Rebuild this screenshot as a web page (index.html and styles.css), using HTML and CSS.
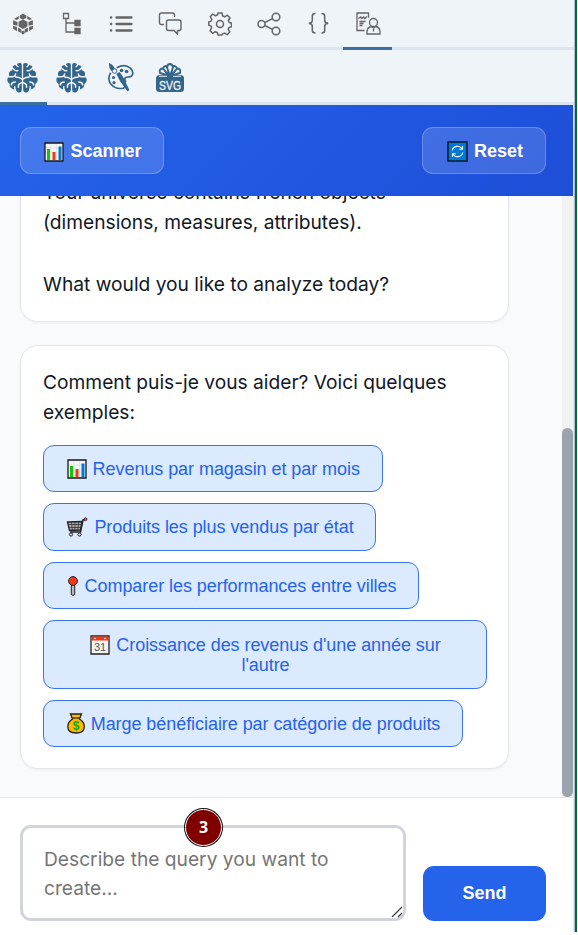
FILE: index.html
```html
<!DOCTYPE html>
<html lang="fr">
<head>
<meta charset="utf-8">
<title>Query assistant</title>
<link rel="stylesheet" href="styles.css">
</head>
<body>
<svg class="defs" aria-hidden="true">
  <symbol id="brain" viewBox="0 0 32 32">
    <g id="lobe"><path d="M15.300 2.500Q15 1 13 1 10.500 1 9.800 3.200 6 3 5.300 6.500 5.200 7.500 5.700 8.500 2 9 2 12.500q0 1 .5 2Q.3 15.500.3 18.500t2.500 4.300Q2.500 27 6.500 28q1.200.3 2.500 0 1 3.500 4 3.500 2.300 0 2.300-2.500z" fill="currentColor"/><path d="M5 5.800L8 8.300q1.500 1.200 3.200.6M1.500 15.300h4q3 0 3.500-3M9 15.500q4 0 6.300 2M4.500 23.500q.5-2.800 4-2.800M11.800 26q-.5-3.500 3.500-4.500M8.500 28.500q-.8-1.500-.5-3M9.600 2.500q.2 1.500 1.700 2.300" fill="none" stroke="#eff4f9" stroke-width="1.500" stroke-linecap="round"/></g>
    <use href="#lobe" transform="matrix(-1 0 0 1 32 0)"/>
  </symbol>
  <symbol id="chart" viewBox="0 0 20 20"><path d="M1 1h18v18H1z" fill="#f4f4f4" stroke="#17171d" stroke-width="1.300"/><path d="M2 6h16M2 11h16M6.500 2v16M12.500 2v16" stroke="#dedede" stroke-width=".6"/><path d="M3 7h3v11H3z" fill="#16c60c"/><path d="M8.500 10h3v8h-3z" fill="#f03a17"/><path d="M14.500 4.500h3V18h-3z" fill="#0078d7"/></symbol>
</svg>
<div class="app">
  <nav class="tabs tabs-main">
    <span class="tab"><svg viewBox="0 0 24 24" width="22" height="24" fill="#646464"><path d="M12 7l4.800 2.500v5.200L12 17.500l-4.800-2.800V9.500zM12 .8l3.600 1.900v2.800L12 7 8.400 5.500V2.700zM7.400 3.200v3L5 7.700 2.200 6.500zM16.600 3.200v3L19 7.700l2.800-1.200zM1.200 7.800l4.800 2v4.200l-4.800-1.200zM22.800 7.800l-4.800 2v4.200l4.800-1.200zM1.200 14l4.300 1.200v4.600l-4.300-2.600zM22.800 14l-4.300 1.200v4.600l4.300-2.600zM6.600 15.800l3.600 2.200v3.800l-3.600-1.500zM17.400 15.800L13.800 18v3.800l3.600-1.500zM12 19l1.500 1.200v2.500L12 23.500l-1.500-.8v-2.500z"/></svg></span>
    <span class="tab"><svg viewBox="0 0 24 24" width="24" height="24" fill="none" stroke="#646464" stroke-width="1.300"><path d="M3.500 1.500h5v5h-5zM6 6.500v13.500h9M6 11h9"/><path d="M15 8.500h5v5h-5zM15 16.500h5v5h-5z" fill="#646464"/></svg></span>
    <span class="tab"><svg viewBox="0 0 24 24" width="24" height="24" fill="none" stroke="#646464" stroke-width="2.300" stroke-linecap="round"><path d="M7.500 5.500h15M7.500 12h15M7.500 18.500h15M2 5.500h.3M2 12h.3M2 18.500h.3"/></svg></span>
    <span class="tab"><svg viewBox="0 0 24 24" width="24" height="24" fill="none" stroke="#646464" stroke-width="1.400" stroke-linejoin="round"><path d="M6 12.500H3.500Q1.500 12.500 1.500 10.500V3q0-2 2-2h11q2 0 2 2v2"/><path d="M10.500 8h10.500q2 0 2 2v6.500q0 2-2 2h-1.500v3.800l-3.500-3.800h-5.500q-2 0-2-2V10q0-2 2-2z"/></svg></span>
    <span class="tab"><svg viewBox="0 0 24 24" width="24" height="24" fill="none" stroke="#646464" stroke-width="1.500" stroke-linejoin="round"><circle cx="12" cy="12" r="3.500"/><path d="M10 1h4l.7 3 2 .8 2.600-1.600 2.700 2.700-1.600 2.600.8 2 2.300.6v3.600l-2.500.7-.8 2 1.600 2.600-2.700 2.700-2.500-1.600-2 .8L14 23h-4l-.7-2.500-2-.8-2.600 1.600L2 18.600l1.600-2.700-.8-2L.8 13.300V10l2.200-.8.8-2L2.200 4.700 4.800 2l2.600 1.800 2-.8z"/></svg></span>
    <span class="tab"><svg viewBox="0 0 24 24" width="24" height="24" fill="none" stroke="#646464" stroke-width="1.500"><circle cx="4.500" cy="12" r="3.500"/><circle cx="19" cy="5" r="3.800"/><circle cx="19" cy="19" r="3.800"/><path d="M7.800 10.500l7.600-3.800M7.800 13.500l7.600 3.800"/></svg></span>
    <span class="tab"><svg viewBox="0 0 24 24" width="24" height="24" fill="none" stroke="#646464" stroke-width="1.500"><path d="M9.500 1.500Q6.300 1.500 6.300 4v4.500q0 2.500-3.500 2.800 3.500.3 3.500 2.800V18.500q0 2.500 3.200 2.500M15.500 1.500q3.200 0 3.200 2.500v4.500q0 2.500 3.500 2.800-3.500.3-3.500 2.800V18.500q0 2.500-3.200 2.500"/></svg></span>
    <span class="tab is-active"><svg viewBox="0 0 26 24" width="26" height="24" fill="none" stroke="#646464" stroke-width="1.300"><path d="M9.500 18.500H2V1h11.500v4.800M3.500 6.500l2-1.500 1.300 1.500L8.500 5l1.200 1.500L12 4.500M4.500 9.500h6M4.500 11.500h4M4.500 13.500h3"/><circle cx="18.500" cy="10.500" r="4"/><path d="M12 22v-2q0-4.500 4-5.500l2.500 1.500 2.500-1.500q4 1 4 5.500v2zM18.500 16v3.500"/></svg></span>
  </nav>
  <nav class="tabs tabs-sub">
    <span class="tab is-active"><svg width="31" height="31"><use href="#brain"/></svg></span>
    <span class="tab"><svg width="31" height="31"><use href="#brain"/></svg></span>
    <span class="tab"><svg viewBox="0 0 30 32" width="28" height="31" fill="none" stroke="currentColor" stroke-width="1.800"><path d="M10.500 5.500Q19 1 25 6q4 4 2 7.500-1 2-4.500 2t-3.500 2.500q0 1.500 1.500 2.500M4 11Q0 17 4 23q5 6 13.500 4.500 1.500-.5 1-2"/><g fill="currentColor" stroke="none"><circle cx="15.500" cy="8.500" r="1.900"/><circle cx="21" cy="9.500" r="1.900"/><circle cx="7" cy="16" r="1.700"/><circle cx="7.500" cy="21.500" r="1.700"/><path d="M2 .5Q7 2 8.500 7L4.500 9Q2 6 2 .5zM10 12l3.500-2 4 6 6.500 13.500L22 31l-8-11z"/></g><circle cx="8" cy="9" r="2.500" stroke-width="1"/></svg></span>
    <span class="tab"><svg viewBox="0 0 30 30" width="30" height="30"><path d="M4.500 12h21q3.500 0 3.500 3.500v10q0 3.500-3.500 3.500h-21Q1 29 1 25.500v-10Q1 12 4.500 12z" fill="currentColor"/><g fill="#eff4f9" stroke="currentColor" stroke-width="1.900"><path d="M13 12.500L5 10q-1.500-5 4-4.500zM17 12.500l8-2.500q1.500-5-4-4.500z"/><path d="M14 12.500L8 5.500Q9.500 1.500 13 4zM16 12.500l6-7Q20.500 1.500 17 4z"/><path d="M15 13L12 4.500q.5-3.500 3-3.500t3 3.500z"/></g><path d="M4 13.300h8M18 13.300h8" stroke="#eff4f9" stroke-width="1"/><text x="15" y="27" class="svg-word" textLength="22" lengthAdjust="spacingAndGlyphs">SVG</text></svg></span>
  </nav>
  <header class="toolbar">
    <button class="ghost scan"><svg class="emo" width="20" height="20"><use href="#chart"/></svg><span>Scanner</span></button>
    <button class="ghost reset"><svg class="emo" viewBox="0 0 21 21" width="21" height="21"><path d="M1 1h19v19H1z" fill="#0078d7" stroke="#101824" stroke-width="1.500"/><path d="M5.200 9.500A5.400 5.400 0 0 1 15 7.800M15.800 11.500A5.400 5.400 0 0 1 6 13.200M15.500 5v3.200H12.300M5.500 16v-3.200H8.700" fill="none" stroke="#fff" stroke-width="1.100"/></svg><span>Reset</span></button>
  </header>
  <main class="chat">
    <div class="messages">
      <section class="card"><p>Your universe contains french objects<br>(dimensions, measures, attributes).<br><br>What would you like to analyze today?</p></section>
      <section class="card">
        <p>Comment puis-je vous aider? Voici quelques<br>exemples:</p>
        <div class="examples">
          <button class="ex ex-1"><svg class="emo" width="20" height="20"><use href="#chart"/></svg><span>Revenus par magasin et par mois</span></button>
          <button class="ex ex-2"><svg class="emo" viewBox="0 0 22 20" width="22" height="20"><path d="M1.500 5L16 4.500 14.500 13l-11 .5z" fill="#aaa" stroke="#222" stroke-width="1.300"/><path d="M2 7.500h13M3 10.500h12M5.500 5l.8 8M9 5v8M12.500 5l-.5 8" stroke="#333" stroke-width=".8"/><path d="M19.500 2.500l-2.500.5-2.500 12H4" fill="none" stroke="#222" stroke-width="1.500"/><circle cx="5" cy="17.500" r="1.600" fill="#ddd" stroke="#222"/><circle cx="13.500" cy="17.500" r="1.600" fill="#ddd" stroke="#222"/><circle cx="19.500" cy="2.200" r="1.500" fill="#e74856" stroke="#222" stroke-width=".7"/></svg><span>Produits les plus vendus par état</span></button>
          <button class="ex ex-3"><svg class="emo" viewBox="0 0 12 20" width="12" height="20"><path d="M4.300 8h3.400v10.500l-1.700 1-1.700-1z" fill="#bbb" stroke="#222"/><circle cx="6" cy="5" r="4.400" fill="#f03a17" stroke="#222"/></svg><span>Comparer les performances entre villes</span></button>
          <button class="ex ex-4"><svg class="emo" viewBox="0 0 20 20" width="20" height="20"><path d="M1 1h18v18H1z" fill="#f4f4f4" stroke="#222" stroke-width="1.300"/><path d="M1.500 1.500h17v4h-17z" fill="#f03a17"/><circle cx="5" cy="3.500" r=".8" fill="#fff"/><circle cx="15" cy="3.500" r=".8" fill="#fff"/><text x="10" y="16" class="cal-day">31</text></svg><span>Croissance des revenus d'une année sur</span><br><span class="tail">l'autre</span></button>
          <button class="ex ex-5"><svg class="emo" viewBox="0 0 18 21" width="18" height="21"><path d="M3.500 1h11l-2 5q4.800 3 4.800 7.500 0 6.500-8.300 6.500T.8 13.500Q.8 9 5.500 6z" fill="#ffb900" stroke="#222" stroke-width="1.300"/><path d="M5 5h8" stroke="#222" stroke-width="1.200"/><text x="9" y="17" class="dollar">$</text></svg><span>Marge bénéficiaire par catégorie de produits</span></button>
        </div>
      </section>
    </div>
    <div class="track"><div class="thumb"></div></div>
  </main>
  <footer class="composer">
    <div class="field">Describe the query you want to<br>create...
      <span class="badge">3</span>
      <svg class="grip" viewBox="0 0 12 12" width="12" height="12"><path d="M1 11L11 1M7 11l4-4" stroke="#444" stroke-width="1.300"/></svg>
    </div>
    <button class="send">Send</button>
  </footer>
</div>
</body>
</html>
```
FILE: styles.css
```css
* { box-sizing: border-box; }
html { background: #fff; }
body {
  margin: 0;
  overflow: hidden;
  font-family: Inter, sans-serif;
  font-size: 19.2px;
  line-height: 30.72px;
  color: #111827;
}
.defs { position: absolute; width: 0; height: 0; }
.app {
  width: 577px;
  height: 932px;
  display: flex;
  flex-direction: column;
  border-right: 2px solid #0a6635;
  background: linear-gradient(90deg, #dfe7ef 574px, #a9c0cd 574px);
  padding-right: 2px;
}
p { margin: 0; white-space: nowrap; }
button { font-family: "Liberation Sans", Arial, sans-serif; margin: 0; white-space: nowrap; }

.tabs { display: flex; background: #eff4f9; border-bottom: 3px solid #dce4ee; color: #33658c; margin-right: -1px; flex: none; }
.tab { width: 49.35px; flex: none; display: flex; align-items: center; justify-content: center; }
.tab svg { display: block; }
.tab.is-active { margin-bottom: -3px; border-bottom: 3px solid #3a6f9f; }
.tabs-main { height: 50px; }
.tabs-main .tab:first-child, .tabs-sub .tab:first-child { width: 47px; padding-right: 2px; }
.tabs-sub { height: 55px; }
.tabs-sub .tab { padding-top: 3px; }
.svg-word { font: 13px "Liberation Sans", sans-serif; fill: #eff4f9; stroke: #eff4f9; stroke-width: .3px; text-anchor: middle; }

.toolbar {
  height: 91px;
  flex: none;
  padding: 22px 27px 22px 20px;
  display: flex;
  justify-content: space-between;
  background: linear-gradient(135deg, #2563eb, #1d4ed8);
}
.ghost {
  height: 47px;
  display: flex;
  align-items: center;
  justify-content: center;
  gap: 6px;
  padding: 2px 0 0 2px;
  color: #fff;
  font-size: 18px;
  font-weight: 700;
  background: rgba(255, 255, 255, .15);
  border: 1px solid rgba(255, 255, 255, .22);
  border-radius: 11px;
}
.scan { width: 144px; }
.reset { width: 124px; }

.chat { height: 601px; flex: none; display: flex; background: #f9fafb; }
.messages {
  flex: 1;
  overflow: hidden;
  display: flex;
  flex-direction: column;
  justify-content: flex-end;
  padding: 0 0 28px 20px;
  gap: 23px;
}
.card {
  width: 489px;
  flex: none;
  padding: 21px 22px;
  background: #fff;
  border: 1px solid #e5e7eb;
  border-radius: 18px;
  box-shadow: 0 1px 3px rgba(0, 0, 0, .06);
}
.examples { display: flex; flex-direction: column; align-items: flex-start; gap: 11px; padding-top: 16.500px; }
.ex {
  height: 47.5px;
  padding: 2px 0 0 1px;
  color: #2563eb;
  font-size: 18px;
  line-height: 20.6px;
  letter-spacing: -.06px;
  background: #dbeafe;
  border: 1px solid #3b74f0;
  border-radius: 11px;
}
.ex .emo { vertical-align: -4px; margin-right: 6px; }
.ex-1 { width: 339.5px; }
.ex-2 { width: 333px; }
.ex-3 { width: 376px; }
.ex-4 { width: 444px; height: 68.5px; }
.ex-5 { width: 420px; }
.cal-day { font: 11px "Liberation Sans", sans-serif; fill: #555; text-anchor: middle; }
.dollar { font: bold 12px "Liberation Sans", sans-serif; fill: #16a60c; text-anchor: middle; }
.track { width: 11px; background: #f1f2f4; padding-top: 232px; }
.thumb { height: 369px; border-radius: 6px; background: #9ca3af; }

.composer {
  flex: 1;
  display: flex;
  justify-content: space-between;
  align-items: flex-start;
  padding: 27px 27px 0 20px;
  background: #fff;
  border-top: 1px solid #e5e7eb;
}
.field {
  position: relative;
  width: 386px;
  height: 96px;
  padding: 17px 21px;
  line-height: 28.8px;
  color: #757575;
  border: 3px solid #d1d5db;
  border-radius: 11px;
  white-space: nowrap;
}
.badge {
  position: absolute;
  left: 162px;
  top: -19px;
  width: 37px;
  height: 37px;
  border-radius: 50%;
  border: 1px solid #fff;
  box-shadow: 0 0 0 1px #111;
  background: #800000;
  color: #fff;
  font: bold 16px/35px "Noto Sans", sans-serif;
  text-align: center;
}
.grip { position: absolute; right: 0; bottom: 0; }
.send {
  width: 123px;
  height: 55px;
  margin-top: 41px;
  padding: 0;
  border: 0;
  border-radius: 11px;
  background: #2563eb;
  color: #fff;
  font: 700 18px "Liberation Sans", Arial, sans-serif;
}
```
